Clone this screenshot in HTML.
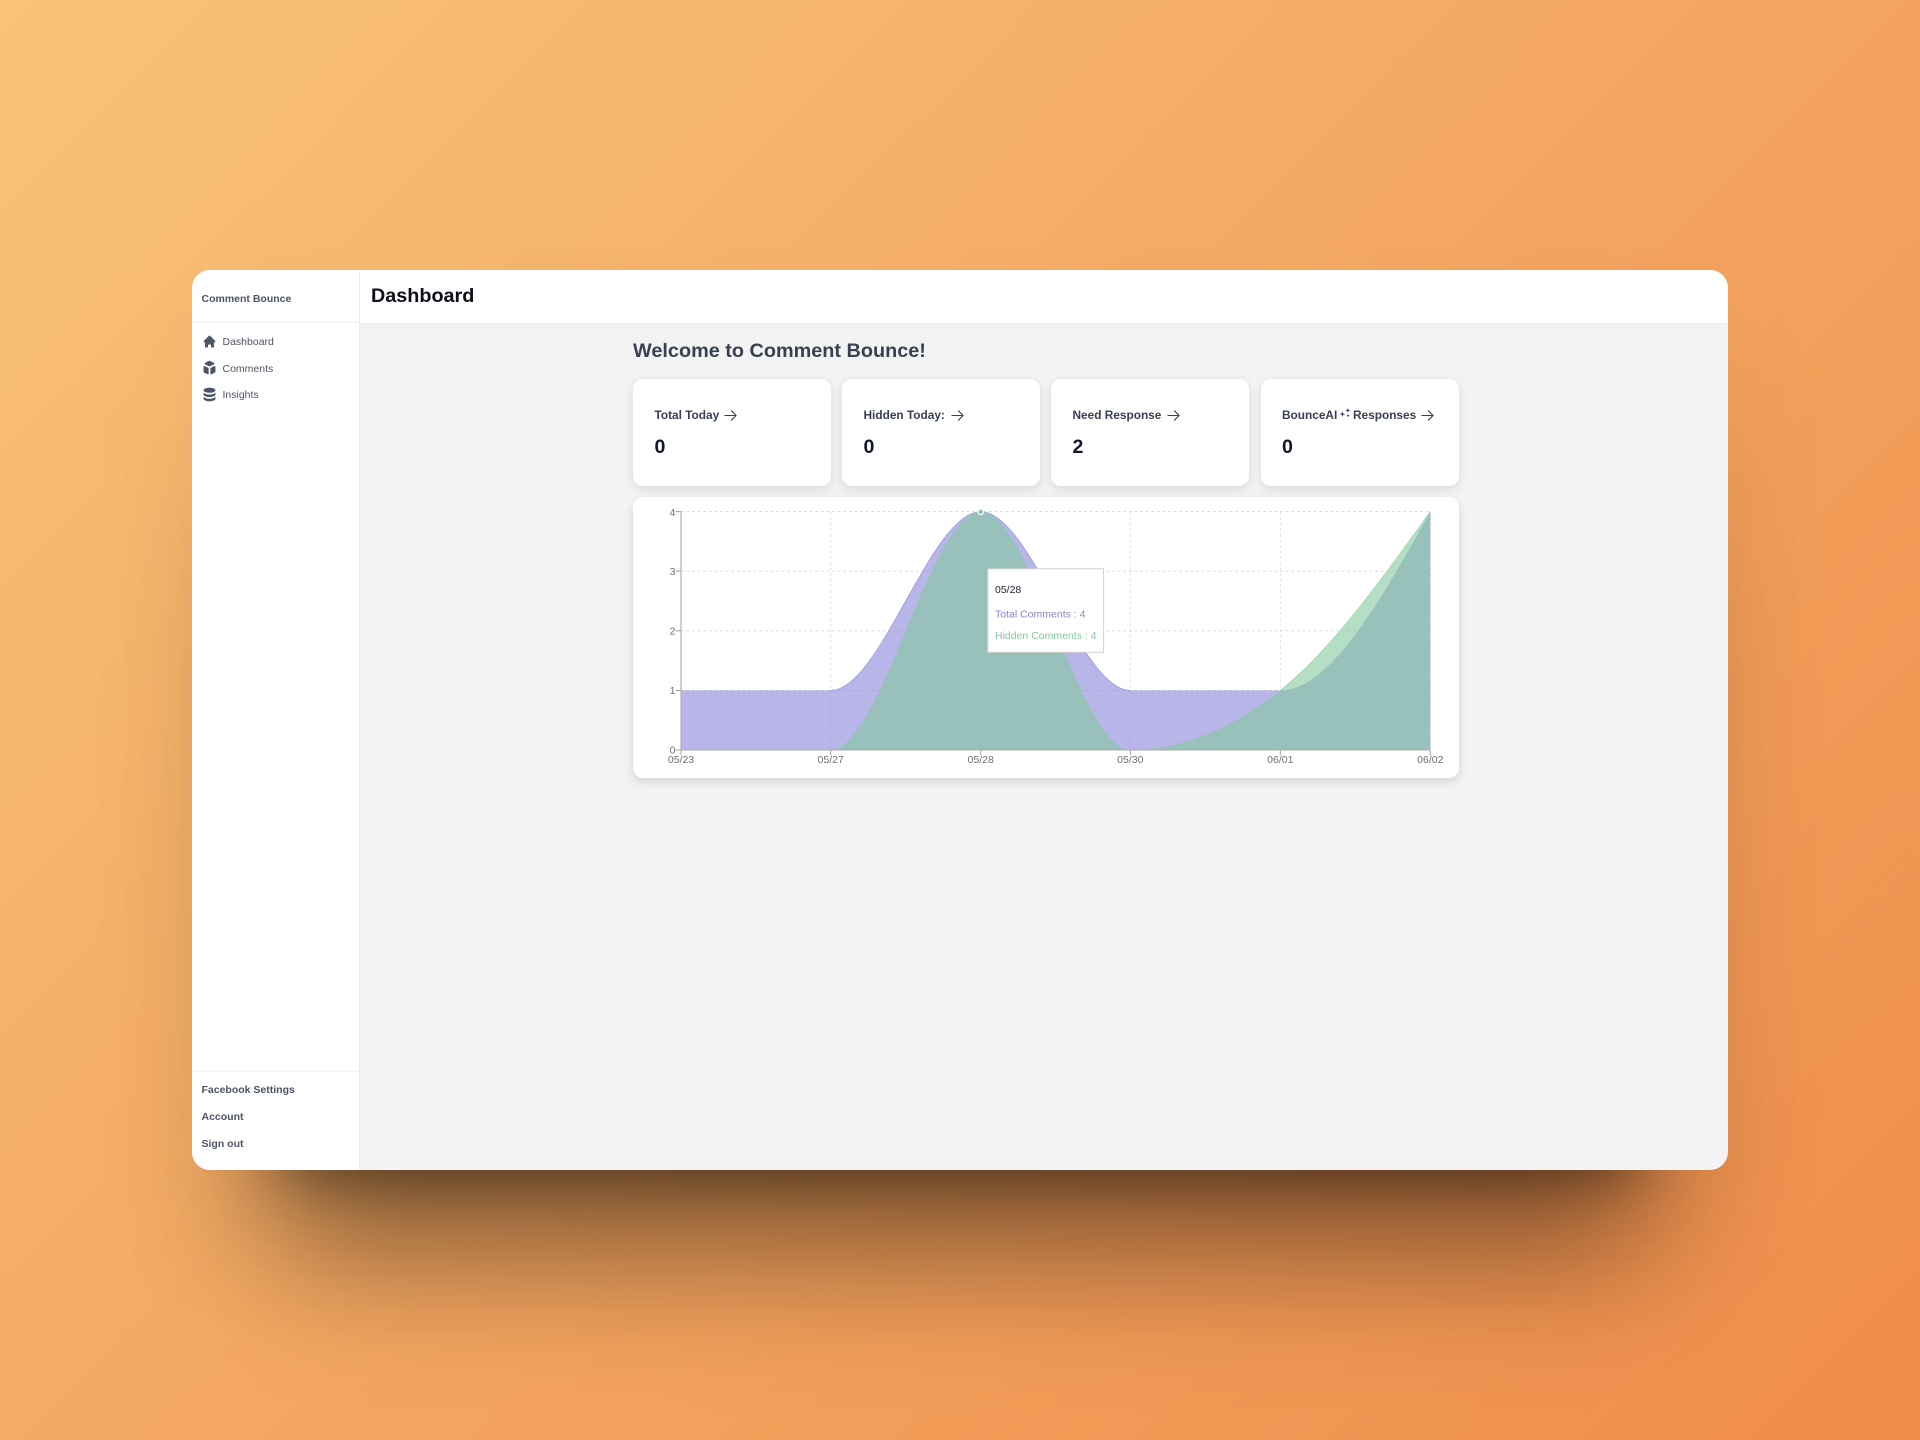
<!DOCTYPE html>
<html><head><meta charset="utf-8"><title>Comment Bounce</title>
<style>
*{box-sizing:border-box;margin:0;padding:0}
html,body{width:1920px;height:1440px;overflow:hidden}
body{position:relative;background:linear-gradient(135deg,#f8c278 0%,#ef8c4b 100%);font-family:"Liberation Sans",Arial,sans-serif}
#win{position:absolute;left:192px;top:270px;width:1536px;height:900px;border-radius:18px;background:#f3f3f3;overflow:hidden}
#shadow{position:absolute;left:192px;top:270px;width:1536px;height:900px;border-radius:18px;box-shadow:0 70px 130px rgba(0,0,0,.055),0 170px 200px -85px rgba(0,0,0,.42),0 90px 60px -90px rgba(0,0,0,.5)}
.t{position:absolute;white-space:nowrap;line-height:20px;height:20px}
#side{position:absolute;left:0;top:0;width:168px;height:900px;background:#fff;border-right:1px solid #eeeeee}
#head{position:absolute;left:168px;top:0;width:1368px;height:54px;background:#fff;border-bottom:1px solid #ebebeb}
.hr{position:absolute;left:0;width:167px;height:1px;background:#efefef}
.nav{font-size:10.5px;color:#4b5563;left:30.5px}
.bot{font-size:10.5px;font-weight:bold;color:#4b5563;left:9.5px}
.card{position:absolute;top:109px;height:107px;width:198px;background:#fff;border-radius:10px;box-shadow:0 3px 10px rgba(0,0,0,.11)}
.ct{font-size:11.85px;font-weight:bold;color:#374151;left:21.5px;top:26px}
.cn{font-size:19.6px;font-weight:bold;color:#111827;left:21.5px;top:58px}
.arrow{position:absolute;top:29px;width:15px;height:15px;fill:none;stroke:#374151;stroke-width:1.7;stroke-linecap:round;stroke-linejoin:round}
.ic{position:absolute;fill:#4b5563}
#chartcard{position:absolute;left:441px;top:227px;width:826px;height:281px;background:#fff;border-radius:10px;box-shadow:0 4px 10px rgba(0,0,0,.13)}
svg text{font-family:"Liberation Sans",Arial,sans-serif}
</style></head>
<body>
<div id="shadow"></div>
<div id="win">
  <div id="side">
    <div class="t" style="left:9.5px;top:19px;font-size:10.5px;font-weight:bold;color:#4b5563">Comment Bounce</div>
    <div class="hr" style="top:52px"></div>
    <svg class="ic" style="left:9.5px;top:64.3px;width:15px;height:15px" viewBox="0 0 20 20"><path d="M10.707 2.293a1 1 0 00-1.414 0l-7 7a1 1 0 001.414 1.414L4 10.414V17a1 1 0 001 1h2a1 1 0 001-1v-2a1 1 0 011-1h2a1 1 0 011 1v2a1 1 0 001 1h2a1 1 0 001-1v-6.586l.293.293a1 1 0 001.414-1.414l-7-7z"/></svg>
    <div class="t nav" style="top:62px">Dashboard</div>
    <svg class="ic" style="left:8.5px;top:89.2px;width:17px;height:17px" viewBox="0 0 20 20"><path d="M11 17a1 1 0 001.447.894l4-2A1 1 0 0017 15V9.236a1 1 0 00-1.447-.894l-4 2a1 1 0 00-.553.894V17zM15.211 6.276a1 1 0 000-1.788l-4.764-2.382a1 1 0 00-.894 0L4.789 4.488a1 1 0 000 1.788l4.764 2.382a1 1 0 00.894 0l4.764-2.382zM4.447 8.342A1 1 0 003 9.236V15a1 1 0 00.553.894l4 2A1 1 0 009 17v-5.764a1 1 0 00-.553-.894l-4-2z"/></svg>
    <div class="t nav" style="top:88.5px">Comments</div>
    <svg class="ic" style="left:8.5px;top:116.2px;width:17px;height:17px" viewBox="0 0 20 20"><path d="M3 12v3c0 1.657 3.134 3 7 3s7-1.343 7-3v-3c0 1.657-3.134 3-7 3s-7-1.343-7-3z"/><path d="M3 7v3c0 1.657 3.134 3 7 3s7-1.343 7-3V7c0 1.657-3.134 3-7 3S3 8.657 3 7z"/><path d="M17 5c0 1.657-3.134 3-7 3S3 6.657 3 5s3.134-3 7-3 7 1.343 7 3z"/></svg>
    <div class="t nav" style="top:115px">Insights</div>
    <div class="hr" style="top:801px;background:#f4f4f4"></div>
    <div class="t bot" style="top:810px">Facebook Settings</div>
    <div class="t bot" style="top:836.5px">Account</div>
    <div class="t bot" style="top:864px">Sign out</div>
  </div>
  <div id="head"><div class="t" style="left:11px;top:16px;font-size:19.8px;font-weight:bold;color:#0b0f17">Dashboard</div></div>

  <div class="t" style="left:441px;top:70.5px;font-size:19.85px;font-weight:bold;color:#374151">Welcome to Comment Bounce!</div>

  <div class="card" style="left:441px">
    <div class="t ct">Total Today</div>
    <svg class="arrow" style="left:90px" viewBox="0 0 24 24"><path d="M13.5 4.5 21 12m0 0-7.5 7.5M21 12H3"/></svg>
    <div class="t cn">0</div>
  </div>
  <div class="card" style="left:650px">
    <div class="t ct">Hidden Today:</div>
    <svg class="arrow" style="left:107.5px" viewBox="0 0 24 24"><path d="M13.5 4.5 21 12m0 0-7.5 7.5M21 12H3"/></svg>
    <div class="t cn">0</div>
  </div>
  <div class="card" style="left:859px">
    <div class="t ct">Need Response</div>
    <svg class="arrow" style="left:114.5px" viewBox="0 0 24 24"><path d="M13.5 4.5 21 12m0 0-7.5 7.5M21 12H3"/></svg>
    <div class="t cn">2</div>
  </div>
  <div class="card" style="left:1068.5px;width:198.5px">
    <div class="t ct">BounceAI</div>
    <svg style="position:absolute;left:78px;top:29px;width:12px;height:12px" viewBox="0 0 12 12" fill="#374151"><path d="M3.4 3.2 L4.1 5.4 L6.3 6.1 L4.1 6.8 L3.4 9 L2.7 6.8 L.5 6.1 L2.7 5.4Z"/><path d="M8.8 .2 L9.5 1.7 L11.2 2.4 L9.5 3.1 L8.8 4.6 L8.1 3.1 L6.4 2.4 L8.1 1.7Z"/><circle cx="9.2" cy="7.6" r="1"/></svg>
    <div class="t ct" style="left:92.5px">Responses</div>
    <svg class="arrow" style="left:159.5px" viewBox="0 0 24 24"><path d="M13.5 4.5 21 12m0 0-7.5 7.5M21 12H3"/></svg>
    <div class="t cn">0</div>
  </div>

  <div id="chartcard"></div>
  <svg style="position:absolute;left:-192px;top:-270px;width:1920px;height:1440px;pointer-events:none" viewBox="0 0 1920 1440">
    <g stroke="#d4d4d4" stroke-width=".9" stroke-dasharray="2.6 3" fill="none">
      <path d="M681 511.6H1430.3M681 571.2H1430.3M681 630.8H1430.3M681 690.4H1430.3"/>
      <path d="M830.7 511.6V750M980.7 511.6V750M1130.3 511.6V750M1280.3 511.6V750M1430.3 511.6V750" stroke="#dcdcdc"/>
    </g>
    <path fill="#8884d8" fill-opacity=".6" d="M681 690.4C731 690.4 780.7 690.4 830.7 690.4C880.7 690.4 930.7 511.6 980.7 511.6C1030.6 511.6 1080.4 690.4 1130.3 690.4C1180.3 690.4 1230.3 690.4 1280.3 690.4C1330.3 690.4 1380.3 601 1430.3 511.6V750H681Z"/>
    <path fill="none" stroke="#8884d8" stroke-width=".8" stroke-opacity=".7" d="M830.7 690.4C880.7 690.4 930.7 511.6 980.7 511.6C1030.6 511.6 1080.4 690.4 1130.3 690.4"/>
    <path fill="#82ca9d" fill-opacity=".6" d="M681 750C731 750 780.7 750 830.7 750C880.7 750 930.7 511.6 980.7 511.6C1030.6 511.6 1080.4 750 1130.3 750C1180.3 750 1230.3 730.1 1280.3 690.4C1330.3 650.7 1380.3 581.2 1430.3 511.6V750H681Z"/>
    <path fill="none" stroke="#82ca9d" stroke-width=".8" stroke-opacity=".6" d="M1280.3 690.4C1330.3 650.7 1380.3 581.2 1430.3 511.6"/>
    <g stroke="#aaa" stroke-width="1.1" fill="none">
      <path d="M681 511.6V750H1430.3"/>
      <path d="M675.5 511.6H681M675.5 571.2H681M675.5 630.8H681M675.5 690.4H681M675.5 750H681"/>
      <path d="M681 750V755M830.7 750V755M980.7 750V755M1130.3 750V755M1280.3 750V755M1430.3 750V755"/>
    </g>
    <g fill="#707070" font-size="10.5" text-anchor="end">
      <text x="675.5" y="516">4</text><text x="675.5" y="575">3</text><text x="675.5" y="634.5">2</text><text x="675.5" y="694">1</text><text x="675.5" y="753.5">0</text>
    </g>
    <g fill="#707070" font-size="10.5" text-anchor="middle">
      <text x="681" y="763">05/23</text><text x="830.7" y="763">05/27</text><text x="980.7" y="763">05/28</text><text x="1130.3" y="763">05/30</text><text x="1280.3" y="763">06/01</text><text x="1430.3" y="763">06/02</text>
    </g>
    <circle cx="980.7" cy="511.8" r="2.8" fill="#82ca9d" stroke="#fff" stroke-width="1.2"/>
    <rect x="987.8" y="568.8" width="115.8" height="83.5" fill="#fff" stroke="#d0d0d0" stroke-width="1"/>
    <text x="995" y="593" font-size="10.5" fill="#1f2430">05/28</text>
    <text x="995" y="617.5" font-size="10.5" fill="#8884d8">Total Comments : 4</text>
    <text x="995" y="638.8" font-size="10.5" fill="#82ca9d">Hidden Comments : 4</text>
  </svg>
</div>
</body></html>
